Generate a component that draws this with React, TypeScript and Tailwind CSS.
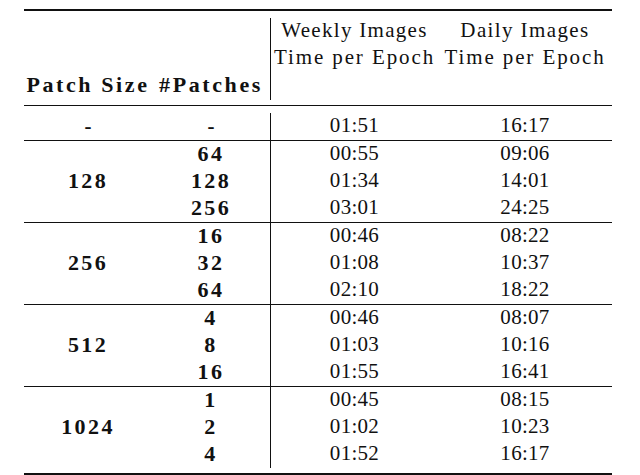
const groups = [
  { size: '128', rows: [['64', '00:55', '09:06'], ['128', '01:34', '14:01'], ['256', '03:01', '24:25']] },
  { size: '256', rows: [['16', '00:46', '08:22'], ['32', '01:08', '10:37'], ['64', '02:10', '18:22']] },
  { size: '512', rows: [['4', '00:46', '08:07'], ['8', '01:03', '10:16'], ['16', '01:55', '16:41']] },
  { size: '1024', rows: [['1', '00:45', '08:15'], ['2', '01:02', '10:23'], ['4', '01:52', '16:17']] },
];

function Rule() {
  return <div className="h-[1px] bg-[#111]" />;
}

export default function App() {
  return (
    <div className="w-[640px] h-[475px] overflow-hidden bg-white text-[#111] font-serif pt-[9px] pl-[24px]">
      <div className="w-[588px] font-['Liberation_Serif']">
        <div className="h-[2px] bg-[#111]" />

        {/* header */}
        <div className="flex h-[94px] leading-[27px]">
          <div className="w-[128px] flex items-end justify-center pb-[7px] font-bold text-[22px] tracking-[2.6px]">
            Patch Size
          </div>
          <div className="w-[118px] flex items-end justify-center pb-[7px] font-bold text-[22px] tracking-[2.6px]">
            #Patches
          </div>
          <div className="w-[1px] mt-[7px] mb-[5px] bg-[#111]" />
          <div className="w-[167px] flex flex-col items-center pt-[6px] text-[21px]">
            <span className="tracking-[1.3px]">Weekly Images</span>
            <span className="tracking-[1.9px]">Time per Epoch</span>
          </div>
          <div className="w-[174px] flex flex-col items-center pt-[6px] text-[21px]">
            <span className="tracking-[1.4px]">Daily Images</span>
            <span className="tracking-[1.9px]">Time per Epoch</span>
          </div>
        </div>
        <Rule />

        {/* baseline row */}
        <div className="flex h-[34px] text-[21px] leading-[27px]">
          <div className="w-[128px] flex items-center justify-center pt-[6px] font-bold">-</div>
          <div className="w-[118px] flex items-center justify-center pt-[6px] font-bold">-</div>
          <div className="w-[1px] mt-[7px] bg-[#111]" />
          <div className="w-[167px] flex items-center justify-center pt-[4px] tracking-[0.3px]">01:51</div>
          <div className="w-[174px] flex items-center justify-center pt-[4px] tracking-[0.3px]">16:17</div>
        </div>

        {groups.map((g, gi) => (
          <div key={g.size}>
            <Rule />
            <div className="flex h-[81px] text-[21px] leading-[27px]">
              <div className="w-[128px] flex items-center justify-center pb-[3px] font-bold text-[22px] tracking-[2.4px]">
                {g.size}
              </div>
              <div className="w-[118px] flex flex-col">
                {g.rows.map((r) => (
                  <div key={r[0]} className="h-[27px] flex items-center justify-center pb-[3px] font-bold text-[22px] tracking-[2.4px]">
                    {r[0]}
                  </div>
                ))}
              </div>
              <div className="w-[1px] bg-[#111]" />
              <div className="w-[167px] flex flex-col">
                {g.rows.map((r) => (
                  <div key={r[1] + gi} className="h-[27px] flex items-center justify-center pb-[3px] tracking-[0.3px]">
                    {r[1]}
                  </div>
                ))}
              </div>
              <div className="w-[174px] flex flex-col">
                {g.rows.map((r) => (
                  <div key={r[2] + gi} className="h-[27px] flex items-center justify-center pb-[3px] tracking-[0.3px]">
                    {r[2]}
                  </div>
                ))}
              </div>
            </div>
          </div>
        ))}

        <div className="mt-[5px] h-[3px] bg-[#111]" />
      </div>
    </div>
  );
}
